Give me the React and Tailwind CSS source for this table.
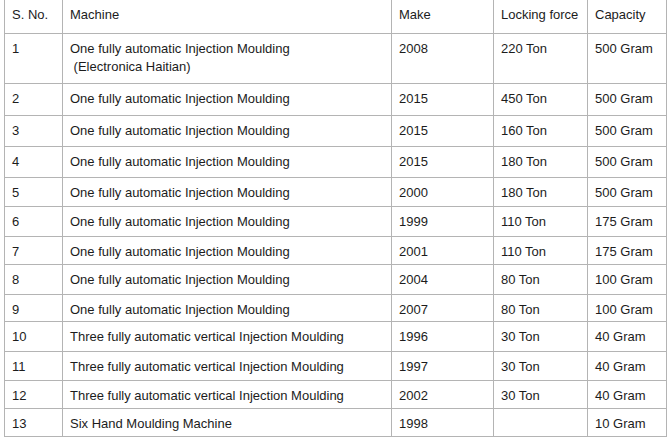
import React from 'react';

const rows = [
    { no: '1', machine: 'One fully automatic Injection Moulding', sub: '\u00a0(Electronica Haitian)', make: '2008', force: '220 Ton', cap: '500 Gram', h: 'h-[50px]' },
    { no: '2', machine: 'One fully automatic Injection Moulding', make: '2015', force: '450 Ton', cap: '500 Gram', h: 'h-[32px]' },
    { no: '3', machine: 'One fully automatic Injection Moulding', make: '2015', force: '160 Ton', cap: '500 Gram', h: 'h-[31px]' },
    { no: '4', machine: 'One fully automatic Injection Moulding', make: '2015', force: '180 Ton', cap: '500 Gram', h: 'h-[31px]' },
    { no: '5', machine: 'One fully automatic Injection Moulding', make: '2000', force: '180 Ton', cap: '500 Gram', h: 'h-[29px]' },
    { no: '6', machine: 'One fully automatic Injection Moulding', make: '1999', force: '110 Ton', cap: '175 Gram', h: 'h-[30px]' },
    { no: '7', machine: 'One fully automatic Injection Moulding', make: '2001', force: '110 Ton', cap: '175 Gram', h: 'h-[28px]' },
    { no: '8', machine: 'One fully automatic Injection Moulding', make: '2004', force: '80 Ton', cap: '100 Gram', h: 'h-[30px]' },
    { no: '9', machine: 'One fully automatic Injection Moulding', make: '2007', force: '80 Ton', cap: '100 Gram', h: 'h-[27px]' },
    { no: '10', machine: 'Three fully automatic vertical Injection Moulding', make: '1996', force: '30 Ton', cap: '40 Gram', h: 'h-[30px]' },
    { no: '11', machine: 'Three fully automatic vertical Injection Moulding', make: '1997', force: '30 Ton', cap: '40 Gram', h: 'h-[29px]' },
    { no: '12', machine: 'Three fully automatic vertical Injection Moulding', make: '2002', force: '30 Ton', cap: '40 Gram', h: 'h-[28px]' },
    { no: '13', machine: 'Six Hand Moulding Machine', make: '1998', force: '', cap: '10 Gram', h: 'h-[28px]' },
];

const cell = 'border border-[#b4b4b4] align-top pl-[7px] pr-1 pt-[6px] pb-0';

export default function App() {
    return (
        <div className="w-[672px] h-[444px] bg-white pl-[4px] font-['Liberation_Sans',Arial,sans-serif] text-[13px] leading-[18px] text-[#1c1c1c]">
            <table className="table-fixed border-collapse w-[662px]">
                <colgroup>
                    <col className="w-[58px]" />
                    <col className="w-[329px]" />
                    <col className="w-[102px]" />
                    <col className="w-[94px]" />
                    <col className="w-[79px]" />
                </colgroup>
                <thead>
                    <tr className="h-[33px]">
                        <td className={cell + ' border-t-0'}>S. No.</td>
                        <td className={cell + ' border-t-0'}>Machine</td>
                        <td className={cell + ' border-t-0'}>Make</td>
                        <td className={cell + ' border-t-0'}>Locking force</td>
                        <td className={cell + ' border-t-0'}>Capacity</td>
                    </tr>
                </thead>
                <tbody>
                    {rows.map((r) => (
                        <tr key={r.no} className={r.h}>
                            <td className={cell}>{r.no}</td>
                            <td className={cell}>
                                {r.machine}
                                {r.sub && <div>{r.sub}</div>}
                            </td>
                            <td className={cell}>{r.make}</td>
                            <td className={cell}>{r.force}</td>
                            <td className={cell}>{r.cap}</td>
                        </tr>
                    ))}
                </tbody>
            </table>
        </div>
    );
}
